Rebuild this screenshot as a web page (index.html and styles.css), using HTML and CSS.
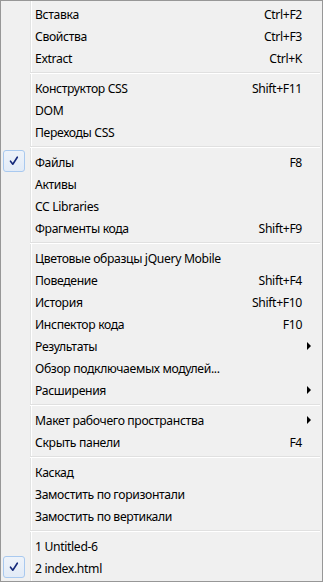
FILE: index.html
```html
<!DOCTYPE html>
<html lang="ru">
<head>
<meta charset="utf-8">
<link rel="stylesheet" href="styles.css">
</head>
<body>
<div class="menu">
  <div class="item"><span class="check"></span><span class="label">Вставка</span><span class="key">Ctrl+F2</span><span class="sub"></span></div>
  <div class="item"><span class="check"></span><span class="label">Свойства</span><span class="key">Ctrl+F3</span><span class="sub"></span></div>
  <div class="item"><span class="check"></span><span class="label">Extract</span><span class="key">Ctrl+K</span><span class="sub"></span></div>
  <div class="sep"></div>
  <div class="item"><span class="check"></span><span class="label">Конструктор CSS</span><span class="key">Shift+F11</span><span class="sub"></span></div>
  <div class="item"><span class="check"></span><span class="label">DOM</span><span class="key"></span><span class="sub"></span></div>
  <div class="item"><span class="check"></span><span class="label">Переходы CSS</span><span class="key"></span><span class="sub"></span></div>
  <div class="sep"></div>
  <div class="item"><span class="check on"><svg width="22" height="22" viewBox="0 0 22 22"><path d="M7.5 11.2 L9.8 14.2 L14.3 7.2" fill="none" stroke="#14287a" stroke-width="1.6" stroke-linecap="round" stroke-linejoin="round"/></svg></span><span class="label">Файлы</span><span class="key">F8</span><span class="sub"></span></div>
  <div class="item"><span class="check"></span><span class="label">Активы</span><span class="key"></span><span class="sub"></span></div>
  <div class="item"><span class="check"></span><span class="label">CC Libraries</span><span class="key"></span><span class="sub"></span></div>
  <div class="item"><span class="check"></span><span class="label">Фрагменты кода</span><span class="key">Shift+F9</span><span class="sub"></span></div>
  <div class="sep"></div>
  <div class="item"><span class="check"></span><span class="label">Цветовые образцы jQuery Mobile</span><span class="key"></span><span class="sub"></span></div>
  <div class="item"><span class="check"></span><span class="label">Поведение</span><span class="key">Shift+F4</span><span class="sub"></span></div>
  <div class="item"><span class="check"></span><span class="label">История</span><span class="key">Shift+F10</span><span class="sub"></span></div>
  <div class="item"><span class="check"></span><span class="label">Инспектор кода</span><span class="key">F10</span><span class="sub"></span></div>
  <div class="item"><span class="check"></span><span class="label">Результаты</span><span class="key"></span><span class="sub"><i class="arrow"></i></span></div>
  <div class="item"><span class="check"></span><span class="label">Обзор подключаемых модулей...</span><span class="key"></span><span class="sub"></span></div>
  <div class="item"><span class="check"></span><span class="label">Расширения</span><span class="key"></span><span class="sub"><i class="arrow"></i></span></div>
  <div class="sep"></div>
  <div class="item"><span class="check"></span><span class="label">Макет рабочего пространства</span><span class="key"></span><span class="sub"><i class="arrow"></i></span></div>
  <div class="item"><span class="check"></span><span class="label">Скрыть панели</span><span class="key">F4</span><span class="sub"></span></div>
  <div class="sep"></div>
  <div class="item"><span class="check"></span><span class="label">Каскад</span><span class="key"></span><span class="sub"></span></div>
  <div class="item"><span class="check"></span><span class="label">Замостить по горизонтали</span><span class="key"></span><span class="sub"></span></div>
  <div class="item"><span class="check"></span><span class="label">Замостить по вертикали</span><span class="key"></span><span class="sub"></span></div>
  <div class="sep"></div>
  <div class="item"><span class="check"></span><span class="label">1 Untitled-6</span><span class="key"></span><span class="sub"></span></div>
  <div class="item"><span class="check on"><svg width="22" height="22" viewBox="0 0 22 22"><path d="M7.5 11.2 L9.8 14.2 L14.3 7.2" fill="none" stroke="#14287a" stroke-width="1.6" stroke-linecap="round" stroke-linejoin="round"/></svg></span><span class="label">2 index.html</span><span class="key"></span><span class="sub"></span></div>
</div>
</body>
</html>
```

FILE: styles.css
```css
html, body {
  margin: 0;
  padding: 0;
  background: #f0f0f0;
}
.menu {
  box-sizing: border-box;
  width: 323px;
  height: 582px;
  border: 1px solid #979797;
  padding: 2px;
  background:
    linear-gradient(to right, transparent 29px, #e2e3e3 29px, #e2e3e3 30px, #ffffff 30px, #ffffff 31px, transparent 31px),
    #f0f0f0;
  font-family: "Noto Sans", "Open Sans", sans-serif;
  font-size: 12.2px;
  letter-spacing: -0.35px;
  color: #000;
  display: flex;
  flex-direction: column;
}
.item {
  display: flex;
  align-items: center;
  height: 22px;
  flex: none;
  white-space: nowrap;
}
.check {
  box-sizing: border-box;
  width: 22px;
  height: 22px;
  flex: none;
  display: flex;
}
.check.on {
  border: 1px solid #a9c9ef;
  border-radius: 3px;
  background: linear-gradient(#eef3fa, #e2ebf7);
  margin-top: -2px;
}
.check svg {
  margin: -1px;
}
.label {
  flex: 1;
  margin-left: 10px;
}
.key {
  flex: none;
}
.sub {
  flex: none;
  width: 18px;
  display: flex;
  align-items: center;
}
.arrow {
  display: block;
  margin-left: 5px;
  width: 0;
  height: 0;
  border-left: 4px solid #000;
  border-top: 4px solid transparent;
  border-bottom: 4px solid transparent;
}
.sep {
  flex: none;
  height: 8px;
  margin-left: 27px;
  background: linear-gradient(to bottom, transparent 3px, #e0e0e0 3px, #e0e0e0 4px, #ffffff 4px, #ffffff 5px, transparent 5px);
}
```
